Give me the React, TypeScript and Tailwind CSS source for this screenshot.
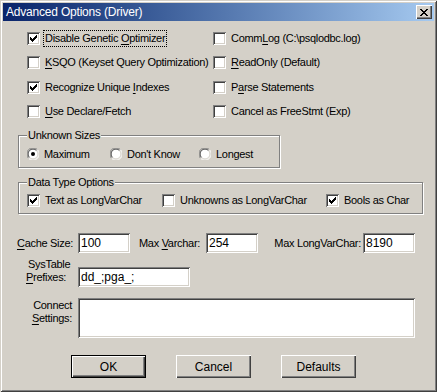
import React from "react";

const FONT = { fontFamily: '"Liberation Sans", Arial, sans-serif' };

function Check({ checked }: { checked?: boolean }) {
  return (
    <div className="w-[13px] h-[13px] shrink-0 bg-white shadow-[inset_1px_1px_#808080,inset_-1px_-1px_#fff,inset_2px_2px_#404040,inset_-2px_-2px_#d4d0c8] flex items-center justify-center">
      {checked && (
        <svg width="7" height="7" viewBox="0 0 7 7" shapeRendering="crispEdges">
          <rect x="0" y="2" width="1" height="3" fill="#000" />
          <rect x="1" y="3" width="1" height="3" fill="#000" />
          <rect x="2" y="4" width="1" height="3" fill="#000" />
          <rect x="3" y="3" width="1" height="3" fill="#000" />
          <rect x="4" y="2" width="1" height="3" fill="#000" />
          <rect x="5" y="1" width="1" height="3" fill="#000" />
          <rect x="6" y="0" width="1" height="3" fill="#000" />
        </svg>
      )}
    </div>
  );
}

function Radio({ checked }: { checked?: boolean }) {
  return (
    <svg width="12" height="12" viewBox="0 0 12 12" className="shrink-0">
      <circle cx="6" cy="6" r="5.5" fill="#fff" />
      <path d="M1.6 10.4 A5.5 5.5 0 0 1 10.4 1.6" stroke="#808080" strokeWidth="1" fill="none" />
      <path d="M10.4 1.6 A5.5 5.5 0 0 1 1.6 10.4" stroke="#fff" strokeWidth="1" fill="none" />
      <path d="M2.5 9.5 A4.5 4.5 0 0 1 9.5 2.5" stroke="#404040" strokeWidth="1" fill="none" />
      <path d="M9.5 2.5 A4.5 4.5 0 0 1 2.5 9.5" stroke="#d4d0c8" strokeWidth="1" fill="none" />
      {checked && <circle cx="6" cy="6" r="2" fill="#000" />}
    </svg>
  );
}

function U({ children }: { children: React.ReactNode }) {
  return <span className="underline underline-offset-[2px]">{children}</span>;
}

function CheckItem({
  checked,
  focus,
  children,
}: {
  checked?: boolean;
  focus?: boolean;
  children: React.ReactNode;
}) {
  return (
    <div className="flex items-center whitespace-nowrap">
      <Check checked={checked} />
      <span
        className={
          "ml-[3px] px-[1px] py-[1px] leading-[13px] border " +
          (focus ? "border-dotted border-black" : "border-transparent")
        }
      >
        {children}
      </span>
    </div>
  );
}

function Sunken({ className, children }: { className: string; children?: React.ReactNode }) {
  return (
    <div
      className={
        "bg-white shadow-[inset_1px_1px_#808080,inset_-1px_-1px_#fff,inset_2px_2px_#404040,inset_-2px_-2px_#d4d0c8] pl-[3px] pt-[3px] text-[12px] leading-[14px] tracking-normal " +
        className
      }
    >
      {children}
    </div>
  );
}

function Button({ children, def }: { children: React.ReactNode; def?: boolean }) {
  return (
    <div
      className={
        "w-[75px] h-[23px] flex items-center justify-center " +
        (def
          ? "shadow-[inset_1px_1px_#000,inset_-1px_-1px_#000,inset_2px_2px_#fff,inset_-2px_-2px_#404040,inset_-3px_-3px_#808080]"
          : "shadow-[inset_1px_1px_#fff,inset_-1px_-1px_#404040,inset_-2px_-2px_#808080]")
      }
    >
      {children}
    </div>
  );
}

export default function App() {
  return (
    <div
      style={FONT}
      className="w-[437px] h-[392px] bg-[#d4d0c8] text-black text-[11px] tracking-[-0.3px] whitespace-nowrap p-[3px] flex flex-col shadow-[inset_1px_1px_#d4d0c8,inset_-1px_-1px_#404040,inset_2px_2px_#fff,inset_-2px_-2px_#808080]"
    >
      {/* Title bar */}
      <div className="h-[18px] bg-gradient-to-r from-[#0a246a] to-[#a6caf0] flex items-center pl-[3px] pr-[2px]">
        <span className="text-white text-[12px] leading-[14px] tracking-[-0.2px]">
          Advanced Options (Driver)
        </span>
        <div className="ml-auto w-[16px] h-[14px] bg-[#d4d0c8] flex items-center justify-center shadow-[inset_1px_1px_#fff,inset_-1px_-1px_#404040,inset_-2px_-2px_#808080]">
          <svg width="8" height="7" viewBox="0 0 8 7" shapeRendering="crispEdges">
            <rect x="0" y="0" width="2" height="1" />
            <rect x="6" y="0" width="2" height="1" />
            <rect x="1" y="1" width="2" height="1" />
            <rect x="5" y="1" width="2" height="1" />
            <rect x="2" y="2" width="4" height="1" />
            <rect x="3" y="3" width="2" height="1" />
            <rect x="2" y="4" width="4" height="1" />
            <rect x="1" y="5" width="2" height="1" />
            <rect x="5" y="5" width="2" height="1" />
            <rect x="0" y="6" width="2" height="1" />
            <rect x="6" y="6" width="2" height="1" />
          </svg>
        </div>
      </div>

      {/* Checkbox grid */}
      <div className="mt-[5px] pl-[24px] grid grid-cols-[186px_1fr] grid-rows-[24px_25px_24px_24px]">
        <CheckItem checked focus>
          Disable Genetic <U>O</U>ptimizer
        </CheckItem>
        <CheckItem>
          Comm<U>L</U>og (C:\psqlodbc.log)
        </CheckItem>
        <CheckItem>
          <U>K</U>SQO (Keyset Query Optimization)
        </CheckItem>
        <CheckItem>
          <U>R</U>eadOnly (Default)
        </CheckItem>
        <CheckItem checked>
          Recognize Unique <U>I</U>ndexes
        </CheckItem>
        <CheckItem>
          P<U>a</U>rse Statements
        </CheckItem>
        <CheckItem>
          <U>U</U>se Declare/Fetch
        </CheckItem>
        <CheckItem>Cancel as FreeStmt (Exp)</CheckItem>
      </div>

      {/* Unknown Sizes */}
      <div className="relative mt-[12px] ml-[15px] w-[262px] h-[33px] border border-[#808080] shadow-[1px_1px_0_#fff,inset_1px_1px_0_#fff] pl-[8px] pt-[11px]">
        <span className="absolute left-[8px] -top-[7px] bg-[#d4d0c8] px-[1px] leading-[13px]">
          Unknown Sizes
        </span>
        <div className="flex items-center h-[14px]">
          <div className="w-[83px] flex items-center gap-[5px]">
            <Radio checked />
            <span>Maximum</span>
          </div>
          <div className="w-[89px] flex items-center gap-[5px]">
            <Radio />
            <span>Don't Know</span>
          </div>
          <div className="flex items-center gap-[5px]">
            <Radio />
            <span>Longest</span>
          </div>
        </div>
      </div>

      {/* Data Type Options */}
      <div className="relative mt-[14px] ml-[15px] w-[405px] h-[32px] border border-[#808080] shadow-[1px_1px_0_#fff,inset_1px_1px_0_#fff] pl-[8px] pt-[11px]">
        <span className="absolute left-[8px] -top-[7px] bg-[#d4d0c8] px-[1px] leading-[13px]">
          Data Type Options
        </span>
        <div className="flex items-center h-[13px]">
          <div className="w-[135px] flex items-center gap-[5px]">
            <Check checked />
            <span>Text as LongVarChar</span>
          </div>
          <div className="w-[164px] flex items-center gap-[5px]">
            <Check />
            <span>Unknowns as LongVarChar</span>
          </div>
          <div className="flex items-center gap-[5px]">
            <Check checked />
            <span>Bools as Char</span>
          </div>
        </div>
      </div>

      {/* Numeric fields */}
      <div className="mt-[19px] flex items-center h-[20px]">
        <div className="w-[70px] text-right">
          <U>C</U>ache Size:
        </div>
        <Sunken className="ml-[5px] w-[52px] h-[20px]">100</Sunken>
        <div className="w-[70px] text-right">
          Max <U>V</U>archar:
        </div>
        <Sunken className="ml-[6px] w-[52px] h-[20px]">254</Sunken>
        <div className="w-[103px] text-right">Max LongVarChar:</div>
        <Sunken className="ml-[2px] w-[52px] h-[20px]">8190</Sunken>
      </div>

      {/* SysTable Prefixes */}
      <div className="mt-[5px] flex items-start">
        <div className="w-[70px] pl-[23px] leading-[13px]">
          <div className="pl-[2px]">SysTable</div>
          <div>
            <U>P</U>refixes:
          </div>
        </div>
        <Sunken className="ml-[5px] mt-[9px] w-[112px] h-[20px]">dd_;pga_;</Sunken>
      </div>

      {/* Connect Settings */}
      <div className="mt-[11px] flex items-start">
        <div className="w-[69px] text-right leading-[13px] pt-[1px]">
          <div>Connect</div>
          <div>
            <U>S</U>ettings:
          </div>
        </div>
        <Sunken className="ml-[6px] w-[337px] h-[40px]" />
      </div>

      {/* Buttons */}
      <div className="mt-[17px] flex pl-[68px] gap-[30px] text-[12px] tracking-normal">
        <Button def>OK</Button>
        <Button>Cancel</Button>
        <Button>Defaults</Button>
      </div>
    </div>
  );
}
